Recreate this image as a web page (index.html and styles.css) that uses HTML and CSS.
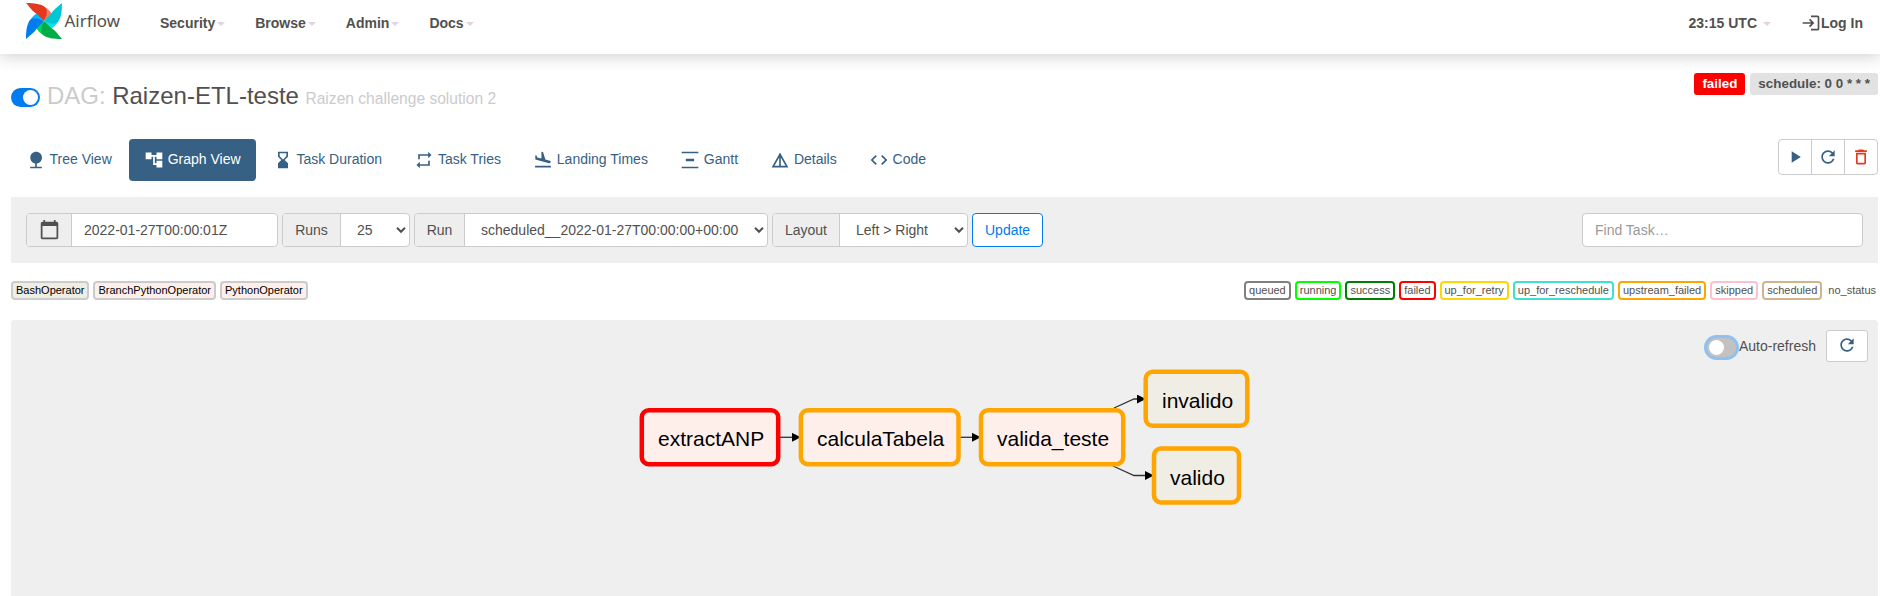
FILE: index.html
```html
<!DOCTYPE html>
<html lang="en">
<head>
<meta charset="utf-8">
<title>Raizen-ETL-teste - Graph - Airflow</title>
<link rel="stylesheet" href="styles.css">
</head>
<body>
<svg class="defs" width="0" height="0">
  <symbol id="i-nature" viewBox="0 0 24 24"><path d="M13 16.12c3.47-.41 6.17-3.36 6.17-6.95 0-3.87-3.13-7-7-7s-7 3.13-7 7c0 3.47 2.52 6.34 5.83 6.89V20H5v2h14v-2h-6v-3.88z"/></symbol>
  <symbol id="i-graph" viewBox="0 0 24 24"><path d="M22 11V3h-7v3H9V3H2v8h7V8h2v10h4v3h7v-8h-7v3h-2V8h2v3z"/></symbol>
  <symbol id="i-hourglass" viewBox="0 0 24 24"><path d="M18 22l-.01-6L14 12l3.99-4.01L18 2H6v6l4 4-4 3.99V22h12zM8 7.5V4h8v3.5l-4 4-4-4z"/></symbol>
  <symbol id="i-repeat" viewBox="0 0 24 24"><path d="M7 7h10v3l4-4-4-4v3H5v6h2V7zm10 10H7v-3l-4 4 4 4v-3h12v-6h-2v4z"/></symbol>
  <symbol id="i-land" viewBox="0 0 24 24"><path d="M2.5 19h19v2h-19v-2zm16.84-3.15c.8.21 1.62-.26 1.84-1.06.21-.8-.26-1.62-1.06-1.84l-5.31-1.42-2.76-9.02L10.12 2v8.28L5.15 8.95l-.93-2.32-1.45-.39v5.17l16.57 4.44z"/></symbol>
  <symbol id="i-gantt" viewBox="0 0 24 24"><path d="M22 2v2H2V2h20zM7 10.5v3h10v-3H7zM2 20v2h20v-2H2z"/></symbol>
  <symbol id="i-details" viewBox="0 0 24 24"><path d="M12 3 2 21h20L12 3zm1 5.92L18.6 19H13V8.92zm-2 0V19H5.4L11 8.92z"/></symbol>
  <symbol id="i-code" viewBox="0 0 24 24"><path d="M9.4 16.6L4.8 12l4.6-4.6L8 6l-6 6 6 6 1.4-1.4zm5.2 0l4.6-4.6-4.6-4.6L16 6l6 6-6 6-1.4-1.4z"/></symbol>
  <symbol id="i-play" viewBox="0 0 24 24"><path d="M8 5v14l11-7z"/></symbol>
  <symbol id="i-refresh" viewBox="0 0 24 24"><path d="M17.65 6.35C16.2 4.9 14.21 4 12 4c-4.42 0-7.99 3.58-7.99 8s3.57 8 7.99 8c3.73 0 6.84-2.55 7.73-6h-2.08c-.82 2.33-3.04 4-5.65 4-3.31 0-6-2.69-6-6s2.69-6 6-6c1.66 0 3.14.69 4.22 1.78L13 11h7V4l-2.35 2.35z"/></symbol>
  <symbol id="i-delete" viewBox="0 0 24 24"><path d="M16 9v10H8V9h8m-1.5-6h-5l-1 1H5v2h14V4h-3.5l-1-1zM18 7H6v12c0 1.1.9 2 2 2h8c1.1 0 2-.9 2-2V7z"/></symbol>
  <symbol id="i-calendar" viewBox="0 0 24 24"><path d="M20 3h-1V1h-2v2H7V1H5v2H4c-1.1 0-2 .9-2 2v16c0 1.1.9 2 2 2h16c1.1 0 2-.9 2-2V5c0-1.1-.9-2-2-2zm0 18H4V8h16v13z"/></symbol>
  <symbol id="i-login" viewBox="0 0 24 24"><path d="M11 7L9.6 8.4l2.6 2.6H2v2h10.2l-2.6 2.6L11 17l5-5-5-5zm9 12h-8v2h8c1.1 0 2-.9 2-2V5c0-1.1-.9-2-2-2h-8v2h8v14z"/></symbol>
  <symbol id="i-chevron" viewBox="0 0 10 8"><path d="M1 1.8l4 4 4-4" fill="none" stroke="#51504f" stroke-width="2"/></symbol>
  <path id="blade" d="M0 0C9 0 15 1 19 4C22 6.500 21 13 18 18C14.500 15 12 11.500 8 9C5 6.500 3 3 0 0z"/>
  <path id="blade-fold" d="M19.500 4.500C22.500 6.500 24.500 8.500 26 11.500C23 14 20 16 18 18C20 13 21 8 19.500 4.500z"/>
</svg>

<nav class="navbar">
  <a class="brand">
    <svg class="pinwheel" viewBox="0 0 36 36">
      <g fill="#ff7557"><use href="#blade-fold"/></g>
      <g fill="#11e1ee" transform="rotate(90 18 18)"><use href="#blade-fold"/></g>
      <g fill="#04d659" transform="rotate(180 18 18)"><use href="#blade-fold"/></g>
      <g fill="#0cb6ff" transform="rotate(270 18 18)"><use href="#blade-fold"/></g>
      <g fill="#e43921"><use href="#blade"/></g>
      <g fill="#00c7d4" transform="rotate(90 18 18)"><use href="#blade"/></g>
      <g fill="#00ad46" transform="rotate(180 18 18)"><use href="#blade"/></g>
      <g fill="#017cee" transform="rotate(270 18 18)"><use href="#blade"/></g>
    </svg>
    <span class="brand-name">Airflow</span>
  </a>
  <div class="menu">
    <a>Security<i class="caret"></i></a>
    <a>Browse<i class="caret"></i></a>
    <a>Admin<i class="caret"></i></a>
    <a>Docs<i class="caret"></i></a>
  </div>
  <div class="menu menu-right">
    <a class="clock">23:15 UTC<i class="caret"></i></a>
    <a class="login"><svg class="icon"><use href="#i-login"/></svg>Log In</a>
  </div>
</nav>

<main class="page">
  <header class="dag-header">
    <h3 class="dag-title">
      <span class="switch on"></span>
      <span class="muted">DAG:</span>
      <span class="dag-name">Raizen-ETL-teste</span>
      <small>Raizen challenge solution 2</small>
    </h3>
    <div class="tags">
      <span class="tag tag-failed">failed</span>
      <span class="tag">schedule: 0 0 * * *</span>
    </div>
  </header>

  <div class="tab-row">
    <div class="tabs">
      <a class="tab"><svg class="icon"><use href="#i-nature"/></svg>Tree View</a>
      <a class="tab active"><svg class="icon"><use href="#i-graph"/></svg>Graph View</a>
      <a class="tab"><svg class="icon"><use href="#i-hourglass"/></svg>Task Duration</a>
      <a class="tab"><svg class="icon"><use href="#i-repeat"/></svg>Task Tries</a>
      <a class="tab"><svg class="icon"><use href="#i-land"/></svg>Landing Times</a>
      <a class="tab"><svg class="icon"><use href="#i-gantt"/></svg>Gantt</a>
      <a class="tab"><svg class="icon"><use href="#i-details"/></svg>Details</a>
      <a class="tab"><svg class="icon"><use href="#i-code"/></svg>Code</a>
    </div>
    <div class="actions">
      <a><svg class="icon"><use href="#i-play"/></svg></a>
      <a><svg class="icon"><use href="#i-refresh"/></svg></a>
      <a class="danger"><svg class="icon"><use href="#i-delete"/></svg></a>
    </div>
  </div>

  <section class="filters">
    <div class="group g-date"><span class="addon"><svg class="icon"><use href="#i-calendar"/></svg></span><span class="field">2022-01-27T00:00:01Z</span></div>
    <div class="group g-runs"><span class="addon">Runs</span><span class="field select">25<svg class="chev"><use href="#i-chevron"/></svg></span></div>
    <div class="group g-run"><span class="addon">Run</span><span class="field select">scheduled__2022-01-27T00:00:00+00:00<svg class="chev"><use href="#i-chevron"/></svg></span></div>
    <div class="group g-layout"><span class="addon">Layout</span><span class="field select">Left &gt; Right<svg class="chev"><use href="#i-chevron"/></svg></span></div>
    <a class="update">Update</a>
    <div class="search">Find Task…</div>
  </section>

  <section class="legend">
    <div class="badges operators">
      <span class="badge bash">BashOperator</span>
      <span class="badge python">BranchPythonOperator</span>
      <span class="badge python">PythonOperator</span>
    </div>
    <div class="badges">
      <span class="badge queued">queued</span>
      <span class="badge running">running</span>
      <span class="badge success">success</span>
      <span class="badge failed">failed</span>
      <span class="badge retry">up_for_retry</span>
      <span class="badge reschedule">up_for_reschedule</span>
      <span class="badge upstream">upstream_failed</span>
      <span class="badge skipped">skipped</span>
      <span class="badge scheduled">scheduled</span>
      <span class="badge none">no_status</span>
    </div>
  </section>

  <section class="graph">
    <div class="graph-tools">
      <span class="switch focus"></span>
      <span class="auto">Auto-refresh</span>
      <a class="refresh"><svg class="icon"><use href="#i-refresh"/></svg></a>
    </div>
    <svg class="canvas" viewBox="629 362 630 150" width="630" height="150">
      <defs>
        <marker id="arrow" viewBox="0 0 10 10" refX="9" refY="5" markerUnits="userSpaceOnUse" markerWidth="9" markerHeight="9" orient="0"><path d="M0 0L10 5L0 10z"/></marker>
      </defs>
      <g class="edges">
        <path d="M778 437.300H800"/>
        <path d="M958 437.300H980"/>
        <path d="M1114 408L1134 399H1145"/>
        <path d="M1113 466L1134 475.500H1153"/>
      </g>
      <g class="nodes">
        <rect class="py fail" x="641.800" y="410.200" width="136.400" height="54" rx="7"/>
        <rect class="py" x="800.900" y="410.200" width="157.600" height="54" rx="7"/>
        <rect class="py" x="981" y="410.200" width="142.200" height="54" rx="7"/>
        <rect class="sh" x="1145.700" y="371.800" width="101.600" height="54" rx="7"/>
        <rect class="sh" x="1154" y="448.500" width="85" height="54" rx="7"/>
      </g>
      <g class="labels">
        <text x="658" y="446">extractANP</text>
        <text x="817" y="446">calculaTabela</text>
        <text x="997" y="446">valida_teste</text>
        <text x="1162" y="408">invalido</text>
        <text x="1170" y="485">valido</text>
      </g>
    </svg>
  </section>
</main>
</body>
</html>
```
FILE: styles.css
```css
* { box-sizing: border-box; }
body {
  margin: 0;
  height: 596px;
  overflow: hidden;
  background: #fff;
  color: #51504f;
  font: 14px/20px "Liberation Sans", Arial, sans-serif;
}
.defs { display: block; }
.icon { width: 20px; height: 20px; fill: currentColor; flex: none; }

.navbar {
  display: flex;
  height: 54px;
  padding: 0 17px 0 26px;
  background: #fff;
  box-shadow: 0 2px 16px rgba(0, 0, 0, .2);
}
.brand { display: flex; width: 119px; }
.pinwheel { width: 36px; height: 36px; margin-top: 3px; }
.brand-name { margin: 11px 0 0 2.500px; font: 16.900px/20px "Noto Sans", sans-serif; }
.menu { display: flex; height: 46px; font-weight: bold; }
.menu a { display: flex; align-items: center; padding: 0 15px; }
.caret {
  margin: 2px 0 0 2px;
  border: 4px solid transparent;
  border-top-color: #e2d2e2;
  border-bottom: 0;
}
.menu-right { margin-left: auto; }
.menu-right a { padding-right: 0; }
.clock .caret { margin-left: 6px; }
.menu-right .login { padding-left: 30px; }

.page {
  display: flex;
  flex-direction: column;
  height: 542px;
  padding: 19px 2px 0 11px;
}
.dag-header { display: flex; justify-content: space-between; height: 66px; }
.dag-title {
  display: flex;
  align-items: baseline;
  margin: 10px 0 0;
  font-size: 24px;
  font-weight: normal;
  line-height: 26px;
}
.muted { margin: 0 6.500px 0 7px; color: #cbcbcb; }
.dag-title small { margin-left: 6.500px; font-size: 15.600px; color: #cbcbcb; }
.switch {
  display: block;
  width: 29px;
  height: 19px;
  padding: 2px;
  border-radius: 10px;
  background: #c4c2c1;
}
.switch::before {
  content: "";
  display: block;
  width: 15px;
  height: 15px;
  border-radius: 50%;
  background: #fff;
}
.switch.on { align-self: flex-start; margin-top: 5px; background: #017cee; }
.switch.on::before { margin-left: 10px; }
.tags { display: flex; gap: 5px; }
.tag {
  height: 22px;
  padding: 0 8px;
  border-radius: 3px;
  background: #e2e2e2;
  font-size: 13.400px;
  font-weight: bold;
  line-height: 21px;
}
.tag-failed { background: #f00; color: #fff; }

.tab-row { display: flex; justify-content: space-between; height: 58px; }
.tabs { display: flex; gap: 2.400px; height: 42px; }
.tab {
  display: flex;
  align-items: center;
  gap: 3.500px;
  padding: 0 15px 2px;
  border-radius: 4px;
  color: #366084;
}
.tab .icon { margin-top: 2px; }
.tab.active { background: #366084; color: #fff; }
.actions {
  display: flex;
  height: 36px;
  border: 1px solid #cbcbcb;
  border-radius: 4px;
  color: #366084;
}
.actions a { display: flex; align-items: center; justify-content: center; width: 33px; }
.actions a:not(:last-child) { border-right: 1px solid #cbcbcb; }
.actions .danger { color: #e43921; width: 32px; }

.filters {
  display: flex;
  gap: 4px;
  height: 66px;
  padding: 16px 15px;
  background: #efefef;
}
.group {
  display: flex;
  height: 34px;
  border: 1px solid #cbcbcb;
  border-radius: 4px;
  background: #fff;
  line-height: 32px;
  overflow: hidden;
}
.addon {
  display: flex;
  align-items: center;
  justify-content: center;
  border-right: 1px solid #cbcbcb;
  background: #eee;
}
.field { padding-left: 12px; white-space: nowrap; }
.select { display: flex; flex: 1; align-items: center; justify-content: space-between; padding: 0 3px 0 16px; }
.chev { width: 10px; height: 8px; }
.g-date { width: 252px; }
.g-date .addon { width: 45px; }
.g-date .icon { width: 21px; height: 21px; margin-top: -2px; }
.g-runs { width: 128px; }
.g-runs .addon { width: 58px; }
.g-run { width: 354px; }
.g-run .addon { width: 50px; }
.g-layout { width: 196px; }
.g-layout .addon { width: 67px; }
.update {
  height: 34px;
  padding: 0 12px;
  border: 1px solid #017cee;
  border-radius: 4px;
  background: #fff;
  color: #017cee;
  line-height: 32px;
}
.search {
  width: 281px;
  height: 34px;
  margin-left: auto;
  padding-left: 12px;
  border: 1px solid #cbcbcb;
  border-radius: 4px;
  background: #fff;
  color: #999;
  line-height: 32px;
}

.legend { display: flex; justify-content: space-between; height: 57px; padding-top: 18px; }
.badges { display: flex; gap: 4px; }
.badge {
  height: 19px;
  padding: 0 3px;
  border: 2px solid #cbcbcb;
  border-radius: 4px;
  font-size: 11px;
  line-height: 15px;
}
.operators { color: #000; }
.bash { background: #f0ede4; }
.python { background: #ffefeb; }
.queued { border-color: gray; }
.running { border-color: lime; }
.success { border-color: green; }
.failed { border-color: red; }
.retry { border-color: gold; }
.reschedule { border-color: turquoise; }
.upstream { border-color: orange; }
.skipped { border-color: pink; }
.scheduled { border-color: tan; }
.none { border-color: transparent; padding: 0; }

.graph { flex: 1; border-radius: 4px 4px 0 0; background: #efefef; }
.graph-tools { display: flex; justify-content: flex-end; height: 42px; padding: 10px 10px 0 0; }
.switch.focus { margin: 8px 3px 0 0; box-shadow: 0 0 0 3px #8fc1f0; }
.auto { line-height: 32px; margin-right: 10px; }
.refresh {
  display: flex;
  align-items: center;
  justify-content: center;
  width: 42px;
  height: 32px;
  padding-bottom: 2px;
  border: 1px solid #cbcbcb;
  border-radius: 3px;
  background: #fff;
  color: #366084;
}
.canvas { display: block; margin-left: 618px; }
.edges path { fill: none; stroke: #333; stroke-width: 1.300; marker-end: url(#arrow); }
.edges path, .nodes rect { vector-effect: non-scaling-stroke; }
.nodes rect { stroke: orange; stroke-width: 4.500; }
.nodes .fail { stroke: red; }
.nodes .py { fill: #ffefeb; }
.nodes .sh { fill: #f0ede4; }
.labels text { font-size: 21px; fill: #000; }
```
